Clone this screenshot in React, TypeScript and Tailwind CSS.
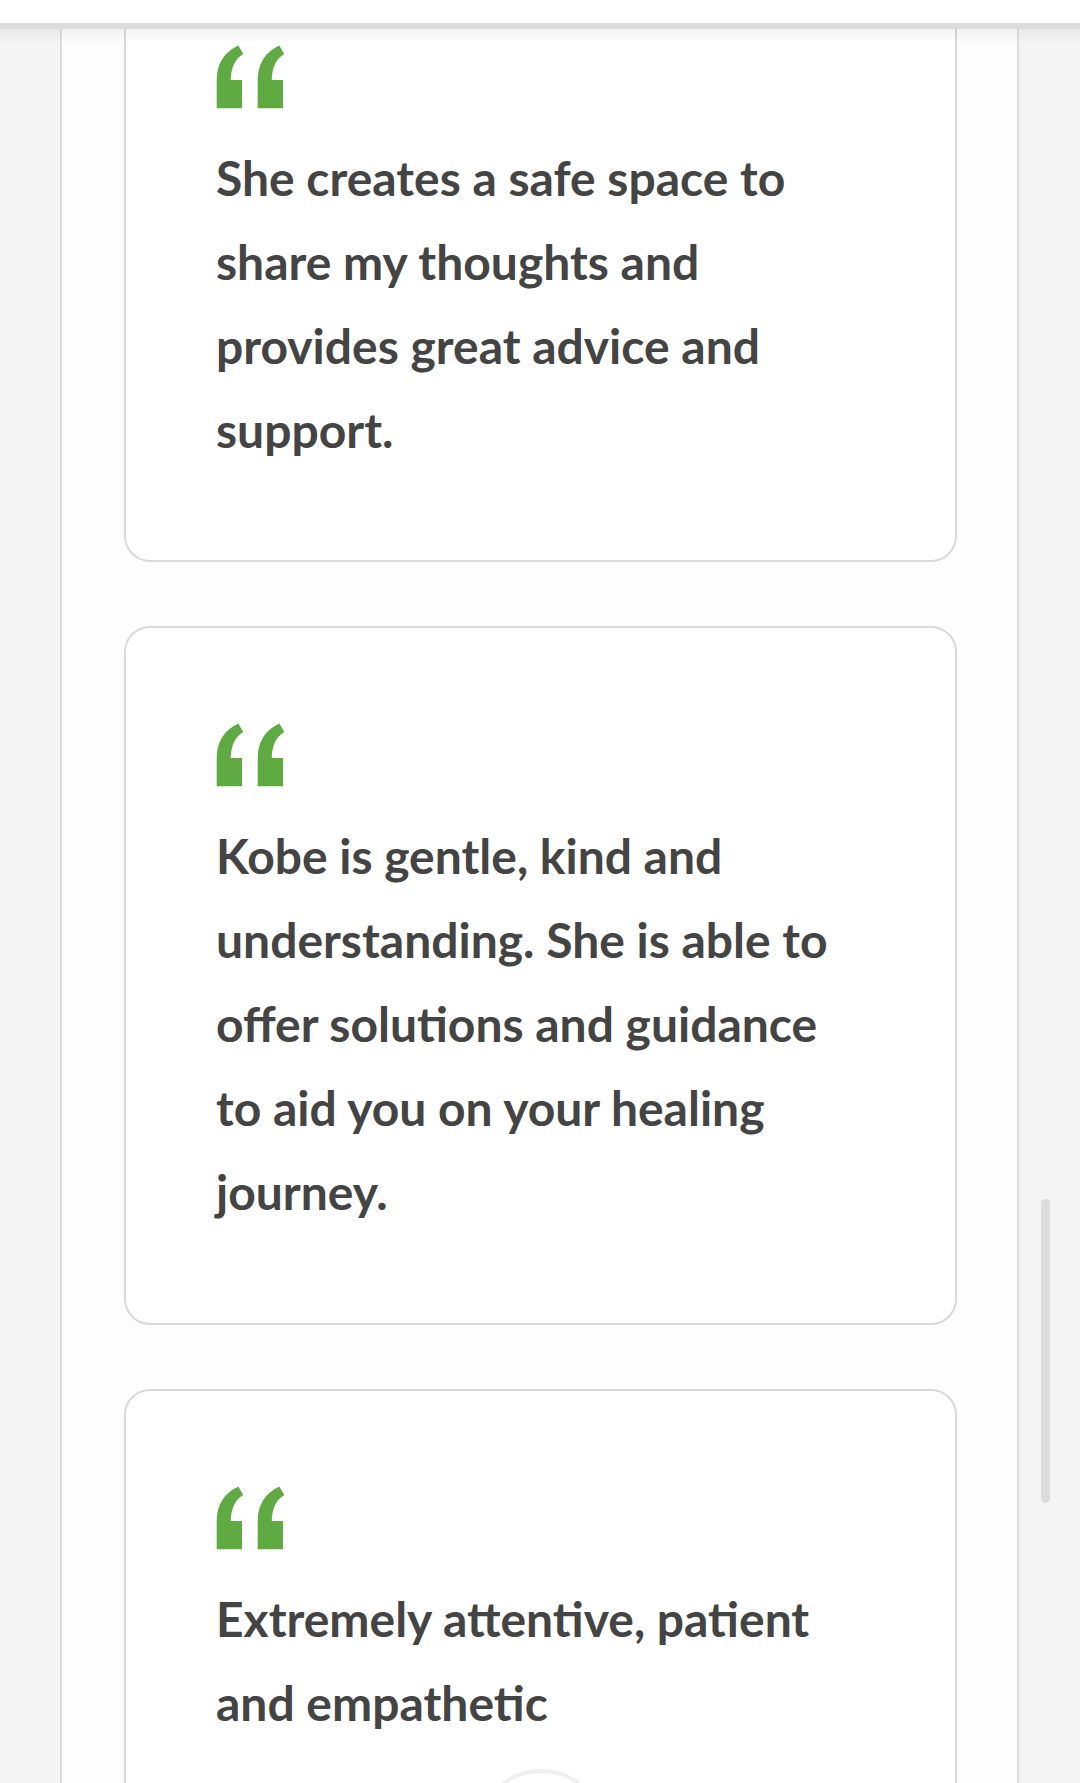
import React from "react";

function QuoteMark() {
  const single = "M0.7 63.3 L0.7 35 C0.7 19 8 7 22.3 0.5 L27.3 9 C19 14 15.2 22 14.7 35 L26 35 L26 63.3 Z";
  return (
    <svg width="68" height="64" viewBox="0 0 68 64" className="block">
      <path d={single} fill="#60aa44" />
      <path d={single} fill="#60aa44" transform="translate(41 0)" />
    </svg>
  );
}

function Card({ text, first, pt, pb, children }: { text: string; first?: boolean; pt: string; pb: string; children?: React.ReactNode }) {
  return (
    <div
      className={
        first
          ? `border-x-2 border-b-2 border-[#d9d9d9] rounded-b-[26px] bg-white px-[90px] ${pt} ${pb}`
          : `border-2 border-[#d9d9d9] rounded-[26px] bg-white px-[90px] ${pt} ${pb}`
      }
    >
      <QuoteMark />
      <p className="mt-[27px] text-[48px] leading-[84px] font-bold text-[#444444]" style={{ fontFamily: "Lato, 'Noto Sans', sans-serif" }}>
        {text}
      </p>
      {children}
    </div>
  );
}

export default function App() {
  return (
    <div className="relative h-[1783px] w-[1080px] overflow-hidden bg-[#f4f4f4]">
      <div className="relative z-10 h-[29px] bg-white border-b-[6px] border-[#dcdcdc]" />
      <div className="absolute left-0 right-0 top-[29px] z-10 h-[14px] bg-gradient-to-b from-black/[0.05] to-transparent" />
      <div className="ml-[60px] w-[959px] h-[1754px] border-x-2 border-[#dcdcdc] bg-[#fdfdfd] pl-[62px] pr-[60px]">
        <div className="flex flex-col gap-[64px]">
          <Card first pt="pt-[16px]" pb="pb-[88px]" text="She creates a safe space to share my thoughts and provides great advice and support." />
          <Card pt="pt-[95px]" pb="pb-[89px]" text="Kobe is gentle, kind and understanding. She is able to offer solutions and guidance to aid you on your healing journey." />
          <Card pt="pt-[95px]" pb="pb-[90px]" text="Extremely attentive, patient and empathetic">
            <div className="mt-[24px] flex justify-center">
              <div className="h-[132px] w-[132px] rounded-full border-4 border-[#f0f0f0] bg-white" />
            </div>
          </Card>
        </div>
      </div>
      <div className="absolute left-[1041px] top-[1199px] h-[304px] w-[9px] rounded-full bg-[#dcdcdc]" />
    </div>
  );
}
